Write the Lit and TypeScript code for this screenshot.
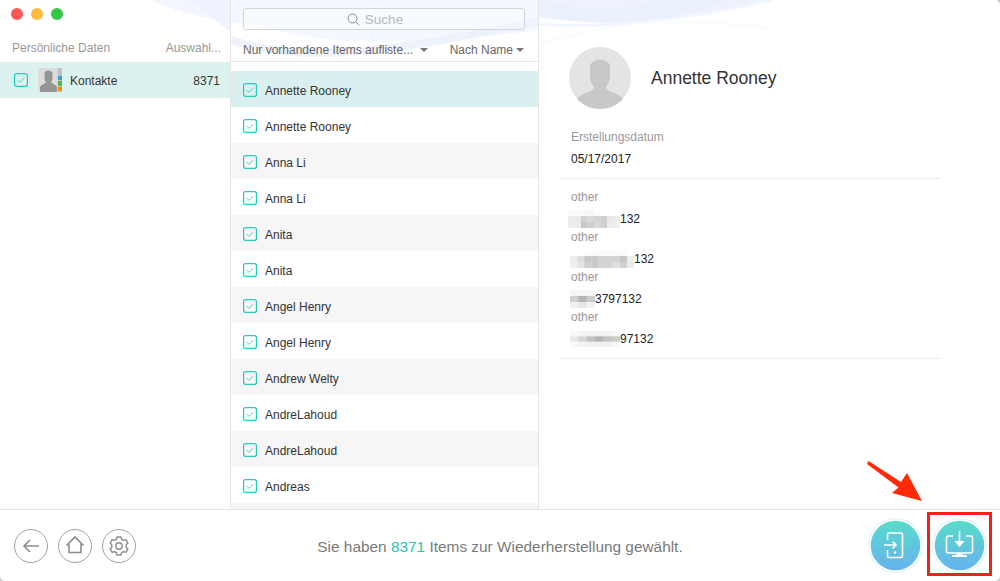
import { LitElement, html, css, svg } from "lit";
import { customElement } from "lit/decorators.js";

const NAMES = ["Annette Rooney","Annette Rooney","Anna Li","Anna Li","Anita","Anita","Angel Henry","Angel Henry","Andrew Welty","AndreLahoud","AndreLahoud","Andreas",""];

const check = (size = 14) => html`<svg class="check" width=${size} height=${size} viewBox="0 0 14 14">
  <rect x="0.6" y="0.6" width="12.8" height="12.8" rx="2" fill="none" stroke="#22cbb6" stroke-width="1.2"/>
  <path d="M3.8 7.2 L6 9.4 L10.4 4.8" fill="none" stroke="#55d0c2" stroke-width="1"/>
</svg>`;

function pix(w: number, h: number, ml: number, cols: string[][]) {
  const cw = w / cols[0].length, ch = h / cols.length;
  return html`<svg class="blur" style="margin-left:${ml}px" width=${w} height=${h} viewBox="0 0 ${w} ${h}">
    ${cols.map((row, y) => row.map((c, x) => svg`<rect x=${x * cw} y=${y * ch} width=${cw + 0.3} height=${ch + 0.3} fill=${c}/>`))}
  </svg>`;
}

const PHONES = [
  { w: 52, h: 18, ml: -3, text: "132", cells: [
    ["#fbfbfb","#fafafa","#f9f9f9","#f8f8f8","#fcfcfc","#ffffff","#ffffff","#ffffff"],
    ["#ececec","#ebebeb","#d2d2d2","#dadada","#d4d4d4","#cfcfcf","#e9e9e9","#ededed"],
    ["#eeeeee","#ececec","#c6c6c6","#cfcfcf","#dadada","#d0d0d0","#ececec","#efefef"],
  ]},
  { w: 64, h: 18, ml: -1, text: "132", cells: [
    ["#ffffff","#ffffff","#fcfcfc","#fbfbfb","#fbfbfb","#fafafa","#fbfbfb","#fbfbfb","#ffffff"],
    ["#eeeeee","#dedede","#c9c9c9","#c9c9c9","#d2d2d2","#d3d3d3","#d3d3d3","#c6c6c6","#ededed"],
    ["#f0f0f0","#e6e6e6","#d0d0d0","#cbcbcb","#d4d4d4","#d4d4d4","#e0e0e0","#d0d0d0","#ebebeb"],
  ]},
  { w: 25, h: 18, ml: -1, text: "3797132", cells: [
    ["#f5f5f5","#f6f6f6","#f6f6f6"],
    ["#cfcfcf","#b5b5b5","#cbcbcb"],
    ["#f0f0f0","#e6e6e6","#f2f2f2"],
  ]},
  { w: 50, h: 16, ml: -1, text: "97132", cells: [
    ["#f9f9f9","#f4f4f4","#f2f2f2","#f2f2f2","#f4f4f4","#f7f7f7"],
    ["#e8e8e8","#d6d6d6","#c2c2c2","#b4b4b4","#c2c2c2","#cccccc"],
    ["#f8f8f8","#f3f3f3","#f1f1f1","#f0f0f0","#f1f1f1","#f6f6f6"],
  ]},
];

@customElement("app-root")
export class AppRoot extends LitElement {
  static styles = css`
    :host { display: block; width: 1000px; height: 581px; background: #c9c9c9; overflow: hidden;
      font-family: "Liberation Sans", Arial, sans-serif; font-size: 12px; color: #333; }
    .window { position: relative; isolation: isolate; width: 1000px; height: 581px; background: #fff;
      border-radius: 0 5px 5px 5px; overflow: hidden; display: flex; flex-direction: column; }
    .swoosh { position: absolute; left: 0; top: 0; z-index: -1; }
    .main { display: flex; height: 509px; flex: none; }

    .side { width: 230px; flex: none; border-right: 1px solid #e6e6e6; box-sizing: content-box; }
    .lights { display: flex; gap: 8px; padding: 8px 0 0 11px; height: 20px; box-sizing: border-box; }
    .light { width: 12px; height: 12px; border-radius: 50%; }
    .red { background: #fc5753; } .yellow { background: #fdbc40; } .green { background: #33c748; }
    .side-head { display: flex; justify-content: space-between; padding: 0 9px 0 12px; height: 24px; align-items: center; margin-top: 16px; color: #999; }
    .side-row { display: flex; align-items: center; height: 36px; margin-top: 2px; background: #dcf2ef; padding: 0 10px 0 14px; color: #333; }
    .side-row .check { margin-right: 10px; }
    .side-row .ico { margin-right: 8px; }
    .side-row span { padding-top: 2px; }
    .side-row .count { margin-left: auto; }

    .mid { width: 307px; flex: none; border-right: 1px solid #e4e4e4; display: flex; flex-direction: column; }
    .mid-top { height: 62px; box-sizing: border-box; border-bottom: 1px solid #e6e6e6; padding: 8px 13px 0 12px; flex: none; }
    .search { height: 22px; box-sizing: border-box; border: 1px solid #d2d6da; border-radius: 3px; display: flex; align-items: center; justify-content: center; gap: 5px; color: #b8b8b8; font-size: 13.5px; padding-right: 18px; background: rgba(255,255,255,.25); }
    .filters { display: flex; justify-content: space-between; margin-top: 12px; color: #666; height: 16px; align-items: center; }
    .drop { display: flex; align-items: center; }
    .tri { width: 0; height: 0; border-left: 4px solid transparent; border-right: 4px solid transparent; border-top: 4px solid #777; }
    .drop .tri.a { margin-left: 7px; margin-right: 20px; }
    .drop .tri.b { margin-left: 3px; margin-right: 1px; }
    .list { flex: 1; overflow: hidden; padding-top: 9px; }
    .row { height: 36px; box-sizing: border-box; padding: 2px 0 0 12px; display: flex; align-items: center; gap: 8px; color: #333; flex: none; }
    .row span { padding-top: 2px; }
    .row.grey { background: #f6f6f6; }
    .row.sel { background: #daf0f0; }

    .detail { flex: 1; padding: 47px 60px 0 21px; }
    .head { display: flex; align-items: center; gap: 20px; padding-left: 9px; height: 62px; }
    .avatar { flex: none; }
    .name { font-size: 17.5px; color: #333; padding-top: 1px; }
    .sec { border-bottom: 1px solid #ececec; padding: 0 0 0 11px; }
    .l { color: #999; height: 20px; line-height: 20px; }
    .v { color: #222; height: 20px; line-height: 20px; display: flex; align-items: center; }
    .created { margin-top: 18px; padding-bottom: 7px; }
    .created .l { height: 20px; }
    .created .v { height: 24px; }
    .phones { padding-top: 8px; padding-bottom: 11px; }
    .phones .item { height: 40px; }
    .phones .v { height: 24px; }
    .blur { flex: none; }

    .foot { position: relative; height: 72px; flex: none; border-top: 1px solid #e3e3e3; box-sizing: border-box; display: flex; align-items: center; }
    .nav { display: flex; gap: 10px; padding-left: 14px; width: 290px; box-sizing: border-box; }
    .nav svg { display: block; }
    .msg { flex: 1; text-align: center; font-size: 15.4px; color: #7a7a7a; white-space: nowrap; padding-top: 2px; }
    .msg b { font-weight: normal; color: #2cc3b2; }
    .acts { display: flex; gap: 9px; width: 290px; justify-content: flex-end; padding-right: 13px; box-sizing: border-box; }
    .act { width: 55px; height: 55px; display: block; }
    .redbox { position: absolute; left: 927px; top: 2px; width: 65px; height: 64px; box-sizing: border-box; border: 3px solid #f0211b; }
    .arrow { position: absolute; left: 860px; top: 455px; }
  `;

  private act(id: string, body: unknown) {
    return html`<svg class="act" viewBox="0 0 55 55">
      <defs><linearGradient id=${id} x1="0" y1="0" x2="0" y2="1"><stop offset="0" stop-color="#58dccb"/><stop offset="1" stop-color="#68b2ee"/></linearGradient></defs>
      <circle cx="27.5" cy="27.5" r="26.800" fill="none" stroke="#dff4f2" stroke-width="1.2"/>
      <circle cx="27.5" cy="27.5" r="24.800" fill="url(#${id})"/>
      ${body}
    </svg>`;
  }

  render() {
    return html`<div class="window">
      <svg class="swoosh" width="1000" height="90" viewBox="0 0 1000 90" fill="none">
        <path d="M150 0 C250 45 420 25 540 14 C620 26 720 12 775 0 Z" fill="#f3f6fe"/>
        <path d="M460 0 C520 22 620 26 660 20 C700 14 750 6 770 0 Z" fill="#edf2fd"/>
        <path d="M540 14 C600 30 660 22 700 10 L730 0 L660 0 C620 12 580 10 540 0 Z" fill="#eaf0fc" opacity=".7"/>
        <path d="M231 14 C300 50 420 46 538 30 L538 0 L231 0 Z" fill="#f5f8fe"/>
        <path d="M231 40 C320 70 440 40 538 22" stroke="#eef2fb" stroke-width="8"/>
        <path d="M190 0 C215 20 225 28 231 32 L231 0 Z" fill="#eef3fd"/>
        <path d="M538 24 C600 30 700 18 770 0" stroke="#f2f6fe" stroke-width="3"/>
        <path d="M538 45 C600 25 660 15 770 28" stroke="#fafbfe" stroke-width="2"/>
      </svg>
      <div class="main">
        <div class="side">
          <div class="lights"><span class="light red"></span><span class="light yellow"></span><span class="light green"></span></div>
          <div class="side-head"><span>Persönliche Daten</span><span>Auswahl...</span></div>
          <div class="side-row">
            ${check()}
            <svg class="ico" width="24" height="24" viewBox="0 0 24 24">
              <rect x="0" y="0" width="23" height="24" rx="3" fill="#dcdcdc"/>
              <path d="M6.500 5 C6.500 1.500 14.500 1.500 14.500 5 L14.500 10 C14.500 12 13.500 13 13 14 C13.500 15.500 18 16.500 19 19 L19 24 L2 24 L2 19 C3 16.500 7.500 15.500 8 14 C7.500 13 6.500 12 6.500 10 Z" fill="#959595"/>
              <rect x="19.5" y="0" width="4.5" height="24" rx="1" fill="#c4c4c4"/>
              <rect x="20" y="3" width="4" height="4" fill="#b7bec6"/>
              <rect x="20" y="8" width="4" height="4" fill="#3f9bd8"/>
              <rect x="20" y="13" width="4" height="5" fill="#4dbb4a"/>
              <rect x="20" y="19" width="4" height="4" fill="#ef8a1d"/>
            </svg>
            <span>Kontakte</span>
            <span class="count">8371</span>
          </div>
        </div>
        <div class="mid">
          <div class="mid-top">
            <div class="search">
              <svg width="13" height="13" viewBox="0 0 13 13" fill="none" stroke="#8a8a8a" stroke-width="1"><circle cx="5.500" cy="5.500" r="4.500"/><path d="M8.800 8.800 L12.400 12.400"/></svg>
              <span>Suche</span>
            </div>
            <div class="filters">
              <span class="drop">Nur vorhandene Items aufliste...<span class="tri a"></span></span>
              <span class="drop">Nach Name<span class="tri b"></span></span>
            </div>
          </div>
          <div class="list">
            ${NAMES.map((n, i) => html`<div class="row ${i === 0 ? "sel" : i % 2 === 0 ? "grey" : ""}">
              ${n ? check() : ""}<span>${n}</span></div>`)}
          </div>
        </div>
        <div class="detail">
          <div class="head">
            <svg class="avatar" width="62" height="62" viewBox="0 0 62 62">
              <defs><clipPath id="av"><circle cx="31" cy="31" r="31"/></clipPath></defs>
              <circle cx="31" cy="31" r="31" fill="#e4e4e4"/>
              <g clip-path="url(#av)">
                <path d="M21 20 C21 10 41 10 41 20 L41 30 C41 35 38 38 37 41 C38 45 50 46 54 52 L54 62 L8 62 L8 52 C12 46 24 45 25 41 C24 38 21 35 21 30 Z" fill="#c8c8c8"/>
              </g>
            </svg>
            <span class="name">Annette Rooney</span>
          </div>
          <div class="sec created">
            <div class="l">Erstellungsdatum</div>
            <div class="v">05/17/2017</div>
          </div>
          <div class="sec phones">
            ${PHONES.map((p) => html`<div class="item"><div class="l">other</div><div class="v">${pix(p.w, p.h, p.ml, p.cells)}${p.text}</div></div>`)}
          </div>
        </div>
      </div>
      <div class="foot">
        <div class="nav">
          <svg width="34" height="34" viewBox="0 0 34 34" fill="none" stroke="#8c8c8c"><circle cx="17" cy="17" r="16.5" stroke-width="0.8"/><path d="M25 17 H10 M16 11 L10 17 L16 23" stroke-width="1.6"/></svg>
          <svg width="34" height="34" viewBox="0 0 34 34" fill="none" stroke="#8c8c8c"><circle cx="17" cy="17" r="16.5" stroke-width="0.8"/><path d="M8.5 16.5 L17 8 L25.500 16.500 M11 15 V23.500 H23 V15" stroke-width="1.6"/></svg>
          <svg width="34" height="34" viewBox="0 0 34 34" fill="none" stroke="#8c8c8c"><circle cx="17" cy="17" r="16.5" stroke-width="0.8"/><circle cx="17" cy="17" r="3.200" stroke-width="1.400"/><path d="M15 8 H19 L19.600 10.300 L21.600 11.400 L23.900 10.700 L25.900 14.100 L24.200 15.800 V18.200 L25.900 19.900 L23.900 23.300 L21.600 22.600 L19.600 23.700 L19 26 H15 L14.400 23.700 L12.400 22.600 L10.100 23.300 L8.100 19.900 L9.800 18.200 V15.800 L8.100 14.100 L10.100 10.700 L12.400 11.400 L14.400 10.300 Z" stroke-width="1.400" stroke-linejoin="round"/></svg>
        </div>
        <div class="msg">Sie haben <b>8371</b> Items zur Wiederherstellung gewählt.</div>
        <div class="acts">
          ${this.act("g1", svg`<g fill="none" stroke="#fff" stroke-width="1.6">
            <path d="M19.500 22 V16.500 Q19.500 15 21 15 H33 Q34.500 15 34.500 16.500 V38 Q34.500 39.500 33 39.500 H21 Q19.500 39.500 19.500 38 V32"/>
            <path d="M16 27 H28 M24.500 23.500 L28 27 L24.500 30.500"/></g><circle cx="27" cy="34.500" r="1.200" fill="#fff"/>`)}
          ${this.act("g2", svg`<g fill="none" stroke="#fff" stroke-width="1.6">
            <path d="M21 18 H16.500 Q14.500 18 14.500 20 V33 Q14.500 35 16.500 35 H38.500 Q40.500 35 40.500 33 V20 Q40.500 18 38.500 18 H34"/>
            <path d="M27.500 13 V25"/></g>
            <path d="M22.500 23 H32.500 L27.500 29 Z" fill="#fff"/>
            <path d="M24.500 35 H30.500 V37 H35 V39 H20 V37 H24.500 Z" fill="#fff"/>`)}
        </div>
        <div class="redbox"></div>
      </div>
      <svg class="arrow" width="70" height="60" viewBox="0 0 70 60">
        <path d="M7 9 L8.500 6 L41 27 L47 18 L62 46 L32 38 L38.500 32.500 Z" fill="#ff2a06"/>
      </svg>
    </div>`;
  }
}
